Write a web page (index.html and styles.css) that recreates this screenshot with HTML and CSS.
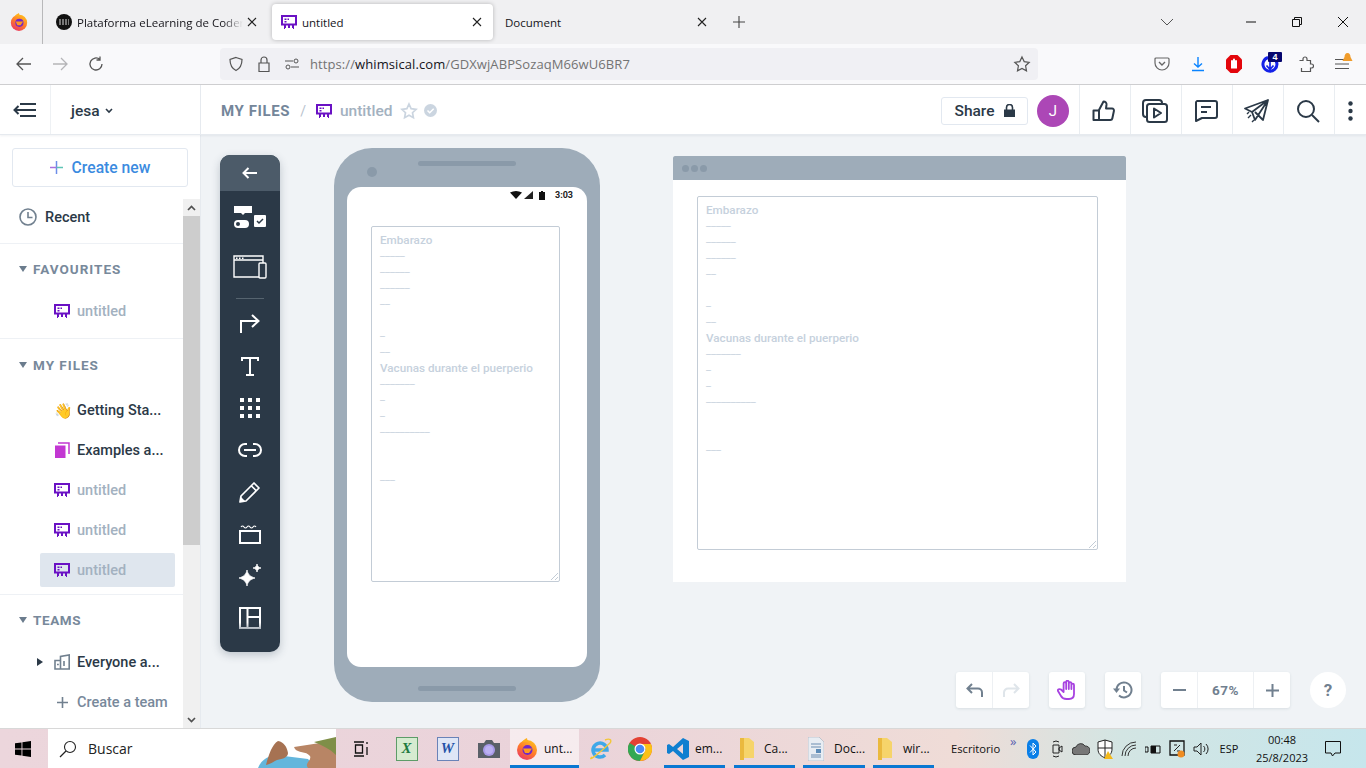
FILE: index.html
```html
<!DOCTYPE html>
<html lang="es">
<head>
<meta charset="utf-8">
<title>untitled</title>
<link rel="stylesheet" href="styles.css">
</head>
<body>
<svg class="defs" width="0" height="0">
  <defs>
    <linearGradient id="ffg" x1=".8" y1="0" x2=".2" y2="1"><stop offset="0" stop-color="#ffc21f"/><stop offset=".5" stop-color="#ff7a2a"/><stop offset="1" stop-color="#e8336b"/></linearGradient>
  </defs>
  <symbol id="wf" viewBox="0 0 16 14">
    <path fill="#6a11c4" fill-rule="evenodd" d="M0 0h16v10.500H0zM2 2v6.500h12V2z"/>
    <path fill="#6a11c4" d="M3.500 3.500h2V5h-2zM6.500 3.500H8V5H6.500zM3.500 6h2v1.500h-2zM3 10h2v3H4v1H3zM7 10h2v3H7zM11 10h2v4h-1v-1h-1z"/>
  </symbol>
  <symbol id="fox" viewBox="0 0 22 22">
    <circle cx="11" cy="12" r="10" fill="url(#ffg)"/>
    <path d="M6 4c1-2 3-3 5-4 0 2 1 3 3 4z" fill="#ffb01f"/>
    <circle cx="11.500" cy="12" r="5" fill="#7227c9"/>
    <path d="M7 10.500h9l-3 4.500H9z" fill="#ff9a1f"/>
  </symbol>
</svg>

<div class="tabbar">
  <div class="ff-cell">
    <svg width="18" height="18"><use href="#fox"/></svg>
  </div>
  <div class="tab">
    <svg class="fav" width="16" height="16" viewBox="0 0 16 16"><circle cx="8" cy="8" r="8" fill="#111"/><path d="M3 6h10M3 8h10M3 10h10" stroke="#ddd" stroke-width="1" stroke-dasharray="2 1"/></svg>
    <span class="tab-title fade">Plataforma eLearning de Coderhouse</span>
    <svg class="x" width="10" height="10" viewBox="0 0 10 10"><path d="M1 1l8 8M9 1l-8 8" stroke="#222" stroke-width="1.100"/></svg>
  </div>
  <div class="tab active">
    <svg class="fav" width="16" height="14"><use href="#wf"/></svg>
    <span class="tab-title">untitled</span>
    <svg class="x" width="10" height="10" viewBox="0 0 10 10"><path d="M1 1l8 8M9 1l-8 8" stroke="#222" stroke-width="1.100"/></svg>
  </div>
  <div class="tab plain">
    <span class="tab-title">Document</span>
    <svg class="x" width="10" height="10" viewBox="0 0 10 10"><path d="M1 1l8 8M9 1l-8 8" stroke="#222" stroke-width="1.100"/></svg>
  </div>
  <svg class="plus" width="12" height="12" viewBox="0 0 12 12"><path d="M6 0v12M0 6h12" stroke="#444" stroke-width="1.100"/></svg>
  <svg class="chev" width="14" height="8" viewBox="0 0 14 8"><path d="M1 1l6 6 6-6" fill="none" stroke="#555" stroke-width="1"/></svg>
  <div class="winbtn"><svg width="10" height="2"><path d="M0 1h10" stroke="#111" stroke-width="1"/></svg></div>
  <div class="winbtn"><svg width="10" height="10" viewBox="0 0 10 10"><path d="M.5 2.500h7v7h-7zM2.500 2.500v-2h7v7h-2" fill="none" stroke="#111"/></svg></div>
  <div class="winbtn"><svg width="10" height="10" viewBox="0 0 10 10"><path d="M0 0l10 10M10 0L0 10" stroke="#111" stroke-width="1"/></svg></div>
</div>

<div class="navbar">
  <div class="nbtn"><svg width="16" height="14" viewBox="0 0 16 14"><path d="M7 1L1 7l6 6M1 7h14" fill="none" stroke="#555" stroke-width="1.300"/></svg></div>
  <div class="nbtn"><svg width="16" height="14" viewBox="0 0 16 14"><path d="M9 1l6 6-6 6M15 7H1" fill="none" stroke="#b5b5b8" stroke-width="1.300"/></svg></div>
  <div class="nbtn"><svg width="16" height="16" viewBox="0 0 16 16"><path d="M14 8a6 6 0 1 1-2-4.500M12 .5v3.500H8.500" fill="none" stroke="#555" stroke-width="1.300"/></svg></div>
  <div class="urlbar">
    <svg width="16" height="16" viewBox="0 0 16 16"><path d="M8 1.500l6 2c0 6-2 9-6 11-4-2-6-5-6-11z" fill="none" stroke="#555" stroke-width="1.200"/></svg>
    <svg width="16" height="18" viewBox="0 0 16 18"><path d="M3 8h10v8.500H3zM5 8V5a3 3 0 0 1 6 0v3" fill="none" stroke="#555" stroke-width="1.200"/></svg>
    <svg width="16" height="16" viewBox="0 0 16 16"><path d="M1 5h8M7 11h8" stroke="#555" stroke-width="1.200"/><circle cx="12" cy="5" r="2" fill="none" stroke="#555"/><circle cx="4" cy="11" r="2" fill="none" stroke="#555"/></svg>
    <span class="url">https://<b>whimsical.com</b>/GDXwjABPSozaqM66wU6BR7</span>
    <svg class="ustar" width="18" height="18" viewBox="0 0 18 18"><path d="M9 2l2.200 4.600 5 .7-3.600 3.500.9 5L9 13.400l-4.500 2.400.9-5L1.800 7.300l5-.7z" fill="none" stroke="#555" stroke-width="1.200"/></svg>
  </div>
  <div class="nav-right">
    <div class="nbtn"><svg width="16" height="16" viewBox="0 0 16 16"><path d="M2 2h12a1 1 0 0 1 1 1v4a7 7 0 0 1-14 0V3a1 1 0 0 1 1-1z" fill="none" stroke="#666" stroke-width="1.200"/><path d="M5 6l3 3 3-3" fill="none" stroke="#666" stroke-width="1.400"/></svg></div>
    <div class="nbtn"><svg width="16" height="16" viewBox="0 0 16 16"><path d="M8 1v10M4 7.500L8 11l4-3.500M2 14.500h12" fill="none" stroke="#0a84ff" stroke-width="1.400"/></svg></div>
    <div class="nbtn"><svg width="18" height="20" viewBox="0 0 18 20"><path d="M5.500 1h7L17 5.500v9L12.500 19h-7L1 14.500v-9z" fill="#e3060c"/><path d="M6 14.500V7a1 1 0 0 1 2 0V5.500a1 1 0 0 1 2 0V7a1 1 0 0 1 2 0v7.500z" fill="#fff"/></svg></div>
    <div class="nbtn badge-wrap">
      <svg width="18" height="20" viewBox="0 0 18 20"><path d="M7 3.500a7 7 0 1 0 6 1" fill="none" stroke="#1421e8" stroke-width="3"/><path d="M9 6v9M5.500 11.500L9 15.500l3.500-4" fill="none" stroke="#1421e8" stroke-width="1.700"/></svg>
      <span class="badge">4</span>
    </div>
    <div class="nbtn"><svg width="16" height="18" viewBox="0 0 16 18"><path d="M2 5.500h3.500V4a2 2 0 0 1 4 0v1.500H13V9h1a2 2 0 0 1 0 4h-1v3.500H4V13" transform="translate(-.5 0)" fill="none" stroke="#555" stroke-width="1.200"/></svg></div>
    <div class="nbtn menu-wrap">
      <svg width="14" height="12" viewBox="0 0 14 12"><path d="M0 1.500h14M0 6h14M0 10.500h14" stroke="#555" stroke-width="1.200"/></svg>
      <svg class="bell" width="11" height="10" viewBox="0 0 10 10"><path d="M5 0c2 0 3 2 3 4l2 4H0l2-4c0-2 1-4 3-4z" fill="#f09c2b"/></svg>
    </div>
  </div>
</div>

<div class="app">
  <header class="app-head">
    <div class="head-left">
      <div class="toggle"><svg width="24" height="16" viewBox="0 0 24 16"><path d="M7 2h16M1 8h22M7 14h16M5.500 4L1.500 8l4 4" fill="none" stroke="#2b3947" stroke-width="2"/></svg></div>
      <div class="account"><span>jesa</span><svg width="8" height="6" viewBox="0 0 8 6"><path d="M1 1l3 3 3-3" fill="none" stroke="#2b3947" stroke-width="1.600"/></svg></div>
    </div>
    <div class="crumbs">
      <span class="crumb-root">MY FILES</span>
      <span class="crumb-sep">/</span>
      <svg width="16" height="14"><use href="#wf"/></svg>
      <span class="crumb-name">untitled</span>
      <svg width="18" height="18" viewBox="0 0 18 18"><path d="M9 2l2.100 4.600 5 .7-3.600 3.400.9 5L9 13.300l-4.400 2.400.9-5L1.900 7.300l5-.7z" fill="none" stroke="#cbd5e0" stroke-width="1.700"/></svg>
      <svg width="13" height="13" viewBox="0 0 13 13"><circle cx="6.500" cy="6.500" r="6.500" fill="#cbd5e0"/><path d="M3.500 6.500l2.200 2.200 4-4" fill="none" stroke="#fff" stroke-width="1.500"/></svg>
    </div>
    <div class="head-right">
      <div class="share"><span>Share</span><svg width="11" height="13" viewBox="0 0 11 13"><path d="M0 5.500h11V13H0z" fill="#2b3947"/><path d="M2.500 6V3.500a3 3 0 0 1 6 0V6" fill="none" stroke="#2b3947" stroke-width="1.600"/></svg></div>
      <div class="avatar">J</div>
      <div class="hcell"><svg width="24" height="24" viewBox="0 0 24 24"><path d="M7 11l4.500-8.500c2 0 3.200 1.300 3 3.200L14 9.500h6c1.400 0 2.200 1.200 1.900 2.500l-1.600 7.500c-.2 1-1 1.500-2 1.500H7zM7 11.500H1.500V21H7" fill="none" stroke="#2b3947" stroke-width="2" stroke-linejoin="round"/></svg></div>
      <div class="hcell"><svg width="26" height="24" viewBox="0 0 26 24"><path d="M4 18a3 3 0 0 1-3-3V4a3 3 0 0 1 3-3h13a3 3 0 0 1 3 3" fill="none" stroke="#2b3947" stroke-width="2"/><rect x="5" y="5" width="20" height="18" rx="2.500" fill="#fff" stroke="#2b3947" stroke-width="2"/><path d="M12 9.500l7 4.500-7 4.500z" fill="none" stroke="#2b3947" stroke-width="2" stroke-linejoin="round"/></svg></div>
      <div class="hcell"><svg width="24" height="22" viewBox="0 0 24 22"><path d="M3 1h18a2 2 0 0 1 2 2v13a2 2 0 0 1-2 2H8l-6 3V3a2 2 0 0 1 1-2zM7 7h10M7 12h6" fill="none" stroke="#2b3947" stroke-width="2" stroke-linejoin="round"/></svg></div>
      <div class="hcell"><svg width="26" height="24" viewBox="0 0 26 24"><path d="M24 1L1 9.500l7 3.500 3 8zM24 1L8 13M24 1L19 21l-8-8" fill="none" stroke="#2b3947" stroke-width="1.800" stroke-linejoin="round"/><path d="M3 15l2-2M4 19l3-3M8 23l2-2" stroke="#2b3947" stroke-width="1.400"/></svg></div>
      <div class="hcell"><svg width="24" height="24" viewBox="0 0 24 24"><circle cx="10" cy="10" r="8" fill="none" stroke="#2b3947" stroke-width="2"/><path d="M16 16l7 7" stroke="#2b3947" stroke-width="2"/></svg></div>
      <div class="hcell last"><svg width="5" height="20" viewBox="0 0 5 20"><circle cx="2.500" cy="2.500" r="2.200" fill="#2b3947"/><circle cx="2.500" cy="10" r="2.200" fill="#2b3947"/><circle cx="2.500" cy="17.500" r="2.200" fill="#2b3947"/></svg></div>
    </div>
  </header>

  <div class="app-body">
    <aside class="sidebar">
      <div class="create-wrap">
        <div class="create"><svg width="13" height="13" viewBox="0 0 13 13"><path d="M6.500 0v13" stroke="#6d8ee8" stroke-width="1.500"/><path d="M0 6.500h6.500" stroke="#a970de" stroke-width="1.500"/><path d="M6.500 6.500H13" stroke="#5fc4b5" stroke-width="1.500"/></svg><span>Create new</span></div>
      </div>
      <div class="side-scroll">
        <div class="side-list">
          <div class="recent"><svg width="18" height="18" viewBox="0 0 18 18"><circle cx="9" cy="9" r="8" fill="none" stroke="#71808f" stroke-width="1.600"/><path d="M9 4v5.500h4.500" fill="none" stroke="#71808f" stroke-width="1.600"/></svg><span>Recent</span></div>
          <section class="sect favs">
            <div class="sect-head fav-head"><i class="tri"></i>FAVOURITES</div>
            <div class="item"><svg width="16" height="14"><use href="#wf"/></svg><span class="muted">untitled</span></div>
          </section>
          <section class="sect files">
            <div class="sect-head files-head"><i class="tri"></i>MY FILES</div>
            <div class="item"><span class="emoji">👋</span><span>Getting Sta...</span></div>
            <div class="item"><svg width="16" height="16" viewBox="0 0 16 16"><path d="M1 3.500h10.500V16H1z" fill="#c237d2"/><path d="M4 1h11v11" fill="none" stroke="#c237d2" stroke-width="1.500"/></svg><span>Examples a...</span></div>
            <div class="item"><svg width="16" height="14"><use href="#wf"/></svg><span class="muted">untitled</span></div>
            <div class="item"><svg width="16" height="14"><use href="#wf"/></svg><span class="muted">untitled</span></div>
            <div class="item current"><svg width="16" height="14"><use href="#wf"/></svg><span class="muted">untitled</span></div>
          </section>
          <section class="teams">
            <div class="sect-head teams-head"><i class="tri"></i>TEAMS</div>
            <div class="item team-item"><i class="tri-right"></i><svg width="16" height="16" viewBox="0 0 16 16"><path d="M1 6.500h5.500V15H1zM6.500 15V2.500L15.200 1v14zM1 15h14.200M3 10.500h1.800M10 7v5" fill="none" stroke="#71808f" stroke-width="1.600"/></svg><span>Everyone a...</span></div>
            <div class="item create-team"><svg width="11" height="11" viewBox="0 0 11 11"><path d="M5.500 0v11M0 5.500h11" stroke="#71808f" stroke-width="1.600"/></svg><span>Create a team</span></div>
          </section>
        </div>
        <div class="scrollbar">
          <div class="sb-btn"><svg width="9" height="6" viewBox="0 0 9 6"><path d="M1 5l3.500-3.500L8 5" fill="none" stroke="#505050" stroke-width="1.700"/></svg></div>
          <div class="sb-thumb"></div>
          <div class="sb-track"></div>
          <div class="sb-btn"><svg width="9" height="6" viewBox="0 0 9 6"><path d="M1 1l3.500 3.500L8 1" fill="none" stroke="#505050" stroke-width="1.700"/></svg></div>
        </div>
      </div>
    </aside>

    <main class="canvas">
      <div class="toolbar">
        <div class="tool-back"><svg width="16" height="12" viewBox="0 0 16 12"><path d="M6.500 1L1.500 6l5 5M1.500 6H15" fill="none" stroke="#fff" stroke-width="2"/></svg></div>
        <div class="tools">
          <div class="tool"><svg width="32" height="24" viewBox="0 0 32 24"><path d="M0 0h18v7h-7l-2 2-2-2H0z" fill="#fff"/><rect x="0" y="14" width="15" height="8" rx="4" fill="#fff"/><circle cx="4" cy="18" r="2" fill="#2b3947"/><rect x="20" y="9" width="12" height="12" rx="1" fill="#fff"/><path d="M23 15l2 2 4-4" fill="none" stroke="#2b3947" stroke-width="1.500"/></svg></div>
          <div class="tool wf-tool"><svg width="34" height="24" viewBox="0 0 34 24"><path d="M1 1h29v21H1zM1 5h29" fill="none" stroke="#fff" stroke-width="1.400"/><path d="M3 2.500h1.500V4H3zM6 2.500h1.500V4H6zM9 2.500h1.500V4H9z" fill="#fff"/><rect x="26" y="8" width="7" height="15" rx="1" fill="#2b3947" stroke="#fff" stroke-width="1.400"/></svg></div>
          <div class="tool-sep"></div>
          <div class="tool"><svg width="20" height="20" viewBox="0 0 20 20"><path d="M1 19V7h17M12 1l6.500 6-6.500 6" fill="none" stroke="#fff" stroke-width="2"/></svg></div>
          <div class="tool"><svg width="18" height="19" viewBox="0 0 18 19"><path d="M1 4V1h16v3M9 1v17M5 18h8" fill="none" stroke="#fff" stroke-width="2"/></svg></div>
          <div class="tool"><svg width="20" height="20" viewBox="0 0 20 20"><path fill="#fff" d="M0 0h4v4H0zM8 0h4v4H8zM16 0h4v4h-4zM0 8h4v4H0zM8 8h4v4H8zM16 8h4v4h-4zM0 16h4v4H0zM8 16h4v4H8zM16 16h4v4h-4z"/></svg></div>
          <div class="tool"><svg width="24" height="14" viewBox="0 0 24 14"><path d="M9 1H7a6 6 0 0 0 0 12h2M15 1h2a6 6 0 0 1 0 12h-2M6 7h12" fill="none" stroke="#fff" stroke-width="2"/></svg></div>
          <div class="tool"><svg width="22" height="22" viewBox="0 0 22 22"><path d="M15 2l5 5L7 20l-6 1 1-6zM12.500 5l4.500 4.500" fill="none" stroke="#fff" stroke-width="1.700" stroke-linejoin="round"/><path d="M1 21l1-5 4 4z" fill="#fff"/></svg></div>
          <div class="tool"><svg width="22" height="20" viewBox="0 0 22 20"><path d="M1 7h20v12H1z" fill="none" stroke="#fff" stroke-width="2"/><path d="M2 3q1.500-2 3 0t3 0 3 0 3 0 3 0" fill="none" stroke="#fff" stroke-width="1.200"/></svg></div>
          <div class="tool"><svg width="24" height="24" viewBox="0 0 24 24"><path d="M9 6c.8 4.500 3 6.500 8 8-5 1.500-7.200 3.500-8 8-.8-4.500-3-6.500-8-8 5-1.500 7.200-3.500 8-8zM19 0c.5 2.500 1.500 3.500 4 4-2.500.5-3.500 1.500-4 4-.5-2.500-1.500-3.500-4-4 2.500-.5 3.500-1.500 4-4z" fill="#fff" stroke="#fff" stroke-width=".8" stroke-linejoin="round"/></svg></div>
          <div class="tool"><svg width="22" height="22" viewBox="0 0 22 22"><defs><linearGradient id="lg" gradientUnits="userSpaceOnUse" x1="0" y1="0" x2="0" y2="22"><stop offset=".7" stop-color="#fff"/><stop offset="1" stop-color="#aab2ba"/></linearGradient></defs><path d="M1 1h20v20H1zM8.500 1v20M8.500 10H21" fill="none" stroke="url(#lg)" stroke-width="2"/></svg></div>
        </div>
      </div>

      <div class="phone">
        <div class="phone-top"><i class="cam"></i><i class="speaker"></i></div>
        <div class="phone-screen">
          <div class="status">
            <svg width="12" height="8" viewBox="0 0 12 8"><path d="M0 1.500Q6-1.500 12 1.500L6 8z" fill="#111"/></svg>
            <svg width="9" height="8" viewBox="0 0 9 8"><path d="M9 0v8H0z" fill="#222"/></svg>
            <svg class="batt" width="6" height="9" viewBox="0 0 6 9"><path d="M2 0h2v1h2v8H0V1h2z" fill="#111"/></svg>
            <span>3:03</span>
          </div>
          <div class="note phone-note">
            <p class="h">Embarazo</p><p>_____</p><p>______</p><p>______</p><p>__</p><p>&nbsp;</p><p>_</p><p>__</p>
            <p class="h">Vacunas durante el puerperio</p><p>_______</p><p>_</p><p>_</p><p>__________</p><p>&nbsp;</p><p>&nbsp;</p><p>___</p>
            <svg class="grip" width="7" height="7" viewBox="0 0 7 7"><path d="M0 7l7-7M4 7l3-3" stroke="#c3ccd6"/></svg>
          </div>
        </div>
        <div class="phone-bottom"><i class="speaker low"></i></div>
      </div>

      <div class="window">
        <div class="win-bar"><i></i><i></i><i></i></div>
        <div class="win-body">
          <div class="note win-note">
            <p class="h">Embarazo</p><p>_____</p><p>______</p><p>______</p><p>__</p><p>&nbsp;</p><p>_</p><p>__</p>
            <p class="h">Vacunas durante el puerperio</p><p>_______</p><p>_</p><p>_</p><p>__________</p><p>&nbsp;</p><p>&nbsp;</p><p>___</p>
            <svg class="grip" width="7" height="7" viewBox="0 0 7 7"><path d="M0 7l7-7M4 7l3-3" stroke="#c3ccd6"/></svg>
          </div>
        </div>
      </div>

      <div class="controls">
        <div class="ctl-group">
          <div class="ctl w36"><svg width="17" height="14" viewBox="0 0 17 14"><path d="M6 1L1.500 5.500 6 10M1.500 5.500H12a4 4 0 0 1 4 4V14" fill="none" stroke="#71808f" stroke-width="2"/></svg></div>
          <div class="ctl w37 sep"><svg width="17" height="14" viewBox="0 0 17 14"><path d="M11 1l4.500 4.500L11 10M15.500 5.500H5a4 4 0 0 0-4 4V14" fill="none" stroke="#dfe5ea" stroke-width="2"/></svg></div>
        </div>
        <div class="ctl-group"><div class="ctl w36"><svg width="20" height="20" viewBox="0 0 20 20"><path d="M1 11l3 5c1 2 3 3 5.500 3H12c3 0 5-2 5-5V5a1.300 1.300 0 0 0-2.600 0V9V3.500a1.300 1.300 0 0 0-2.600 0V9V2a1.300 1.300 0 0 0-2.600 0v7V3.500a1.300 1.300 0 0 0-2.600 0V12L4 9.500C2.500 8.500 0 9.500 1 11z" fill="none" stroke="#a742e0" stroke-width="1.800" stroke-linejoin="round"/></svg></div></div>
        <div class="ctl-group"><div class="ctl w36"><svg width="20" height="18" viewBox="0 0 20 18"><path d="M3.500 9a7.500 7.500 0 1 1 2.500 5.500" fill="none" stroke="#71808f" stroke-width="2"/><path d="M0 7.500h7L3.500 12z" fill="#71808f"/><path d="M11 5v4.500l3 2" fill="none" stroke="#71808f" stroke-width="2"/></svg></div></div>
        <div class="ctl-group">
          <div class="ctl w36"><svg width="13" height="2"><path d="M0 1h13" stroke="#71808f" stroke-width="2"/></svg></div>
          <div class="ctl w56 sep pct">67%</div>
          <div class="ctl w37 sep"><svg width="13" height="13" viewBox="0 0 13 13"><path d="M6.500 0v13M0 6.500h13" stroke="#71808f" stroke-width="2"/></svg></div>
        </div>
        <div class="help">?</div>
      </div>
    </main>
  </div>
</div>

<footer class="taskbar">
  <div class="start"><svg width="16" height="16" viewBox="0 0 16 16"><path fill="#000" d="M0 2.300L6.500 1.400v6.100H0zM7.400 1.300L16 0v7.500H7.400zM0 8.400h6.500v6.200L0 13.700zM7.400 8.400H16V16l-8.600-1.200z"/></svg></div>
  <div class="search">
    <svg width="18" height="18" viewBox="0 0 18 18"><circle cx="11" cy="7" r="5.500" fill="none" stroke="#222" stroke-width="1.100"/><path d="M7 11l-6 6" stroke="#222" stroke-width="1.300"/></svg>
    <span>Buscar</span>
    <svg class="island" width="78" height="39" viewBox="0 0 78 39"><path d="M0 39C3 31 10 27 18 26l32 4 8 9z" fill="#63b6dc"/><path d="M8 36c2-8 6-21 12-24 6 1 9 6 10 12 0 4-5 6-11 7-4 2-7 4-11 5z" fill="#a67252"/><path d="M36 18l26-4 16-2v27H50c-4-5 4-7 2-12-4-5-12-3-15-7z" fill="#b88565"/><path d="M56 13l22-5v18c-6-6-14-10-22-13z" fill="#7f8f48"/></svg>
  </div>
  <div class="tb-icon taskview"><svg width="16" height="16" viewBox="0 0 16 16"><path d="M1 1h10M1 15h10M2.500 4h7v8h-7zM14 1v2M14 6v8" fill="none" stroke="#111" stroke-width="1.300"/></svg></div>
  <div class="tb-icon"><span class="office excel">X</span></div>
  <div class="tb-icon"><span class="office word">W</span></div>
  <div class="tb-icon"><svg width="24" height="20" viewBox="0 0 24 20"><path d="M1 4h6l2-3h6l2 3h6v15H1z" fill="#5a6068"/><circle cx="12" cy="11" r="6" fill="#a99ae8"/><circle cx="12" cy="11" r="4" fill="#bcb1f2"/></svg></div>
  <div class="tb-app ff active-app">
    <svg width="22" height="22"><use href="#fox"/></svg>
    <span>unt...</span>
  </div>
  <div class="tb-icon ie"><svg width="24" height="24" viewBox="0 0 24 24"><path d="M5 13h14a7 7 0 1 0-2 5" fill="none" stroke="#3fa8e8" stroke-width="3.500"/><path d="M4 20C0 24 6 21 22 6c2-3 0-5-5-3" fill="none" stroke="#f2c73a" stroke-width="1.400"/></svg></div>
  <div class="tb-icon chrome"><svg width="24" height="24" viewBox="0 0 24 24"><circle cx="12" cy="12" r="12" fill="#e34133"/><path d="M12 12L1.500 6A12 12 0 0 0 12 24l6-12z" fill="#34a853"/><path d="M12 7h11a12 12 0 0 1-11 17l6-12z" fill="#fbc116"/><circle cx="12" cy="12" r="5.500" fill="#fff"/><circle cx="12" cy="12" r="4.300" fill="#4a8af4"/></svg></div>
  <div class="tb-app vs active-line">
    <svg width="24" height="24" viewBox="0 0 24 24"><path d="M17 1l6 3v16l-6 3L7 14l-4 3-2-1V8l2-1 4 3zM17 7l-6 5 6 5z" fill="#0f7fd0"/></svg>
    <span>em...</span>
  </div>
  <div class="tb-app folder active-line">
    <svg width="14" height="22" viewBox="0 0 14 22"><path d="M0 0h9l5 4v16H0z" fill="#f6d46a"/><path d="M0 0h4v22H0z" fill="#eab93e"/></svg>
    <span>Ca...</span>
  </div>
  <div class="tb-app doc active-line">
    <svg width="16" height="24" viewBox="0 0 16 24"><path d="M0 0h11l5 5v19H0z" fill="#e8edf3" stroke="#a3adb8" stroke-width=".6"/><path d="M3 7h10M3 10h10M3 18h10M3 20h10" stroke="#6d8db0" stroke-width="1"/><path d="M8 12h5v4H8z" fill="#5d8cb8"/></svg>
    <span>Doc...</span>
  </div>
  <div class="tb-app folder2 active-line">
    <svg width="14" height="22" viewBox="0 0 14 22"><path d="M0 0h9l5 4v16H0z" fill="#f6d46a"/><path d="M0 0h4v22H0z" fill="#eab93e"/></svg>
    <span>wir...</span>
  </div>
  <span class="desk">Escritorio</span>
  <span class="more">»</span>
  <div class="tray">
    <div class="ti"><svg width="12" height="20" viewBox="0 0 12 20"><rect width="12" height="20" rx="6" fill="#0a7fe8"/><path d="M3 6.500l6 6.500-3 3V4l3 3-6 6.500" fill="none" stroke="#fff"/></svg></div>
    <div class="ti"><svg width="12" height="18" viewBox="0 0 12 18"><path d="M2 5h6v8H2zM8 8l3-2v6l-3-2zM2 2q3-2 6 0M2 16q3 2 6 0" fill="none" stroke="#222"/></svg></div>
    <div class="ti"><svg width="18" height="12" viewBox="0 0 18 12"><path d="M4 12a4 4 0 0 1 0-8 5 5 0 0 1 9-1 4.500 4.500 0 0 1 1 9z" fill="#777" stroke="#222" stroke-width=".8"/></svg></div>
    <div class="ti shield"><svg width="16" height="20" viewBox="0 0 16 20"><path d="M8 1l7 2v7c0 5-3 7-7 9-4-2-7-4-7-9V3z" fill="#fff" stroke="#222"/><path d="M8 1v18M1 9h14" stroke="#222"/><path d="M13 11l5 8H9z" transform="translate(-2 1)" fill="#f3b91c"/></svg></div>
    <div class="ti"><svg width="16" height="16" viewBox="0 0 16 16"><path d="M1 15A14 14 0 0 1 15 1M4 15A11 11 0 0 1 15 4M7 15a8 8 0 0 1 8-8" fill="none" stroke="#333"/></svg></div>
    <div class="ti"><svg width="16" height="12" viewBox="0 0 16 12"><path d="M6 3h9v7H6zM0 4h3v5H0z" fill="none" stroke="#111"/><path d="M6 3h5v7H6z" fill="#111"/></svg></div>
    <div class="ti"><svg width="16" height="18" viewBox="0 0 16 18"><path d="M1 1h14v14H1z" fill="none" stroke="#111" stroke-width="1.300"/><path d="M5 11l6-6M5 5h3M11 11H8" stroke="#222"/><circle cx="12" cy="14" r="3.500" fill="#ef8c21"/></svg></div>
    <div class="ti"><svg width="16" height="14" viewBox="0 0 16 14"><path d="M1 5h3l4-4v12L4 9H1zM10.500 4a4 4 0 0 1 0 6M13 2a7 7 0 0 1 0 10" fill="none" stroke="#222"/></svg></div>
  </div>
  <span class="lang">ESP</span>
  <div class="clock"><span>00:48</span><span>25/8/2023</span></div>
  <div class="notif"><svg width="16" height="16" viewBox="0 0 16 16"><path d="M.5.5h15v11.500H10L7.500 15 6 12H.5z" fill="none" stroke="#111"/></svg></div>
</footer>
</body>
</html>
```
FILE: styles.css
```css
* { box-sizing: border-box; }
html, body { margin: 0; padding: 0; }
body { width: 1366px; height: 768px; overflow: hidden; display: flex; flex-direction: column; font-family: Roboto, "Liberation Sans", sans-serif; background: #fff; color: #2b3947; }
.defs { position: absolute; }
svg { display: block; flex: none; }
p { margin: 0; }
i { display: block; }

/* browser tabs */
.tabbar { height: 44px; flex: none; display: flex; align-items: center; background: #f0f0f2; font-family: "Open Sans", sans-serif; font-size: 11.500px; color: #15141a; }
.ff-cell { width: 43px; height: 44px; flex: none; display: flex; align-items: center; justify-content: center; border-right: 1px solid #b8b8ba; padding-right: 5px; margin-right: 4px; }
.tab { width: 221px; height: 36px; flex: none; margin-right: 4px; display: flex; align-items: center; padding: 0 11px 0 9px; gap: 5px; border-radius: 4px; }
.tab.active { background: #fff; box-shadow: 0 0 4px rgba(0,0,0,.25); }
.tab.plain { padding-left: 8px; }
.tab-title { flex: 1; min-width: 0; overflow: hidden; white-space: nowrap; }
.fade { -webkit-mask-image: linear-gradient(90deg, #000 88%, transparent); mask-image: linear-gradient(90deg, #000 88%, transparent); }
.tab .x { margin-left: -1px; }
.plus { margin-left: 11px; }
.chev { margin-left: 415px; margin-right: 54px; }
.winbtn { width: 46px; height: 44px; flex: none; display: flex; align-items: center; justify-content: center; }

/* nav bar */
.navbar { height: 41px; flex: none; display: flex; align-items: center; padding: 0 6px 1px; background: #f9f9fb; border-bottom: 1px solid #cfcfd1; }
.nbtn { width: 36px; height: 32px; flex: none; display: flex; align-items: center; justify-content: center; position: relative; }
.urlbar { width: 818px; height: 32px; flex: none; margin-left: 106px; background: #f0f0f4; border-radius: 4px; display: flex; align-items: center; padding: 0 7px 0 8px; gap: 12px; }
.url { margin-left: -2px; font-family: "Open Sans", sans-serif; font-size: 13px; letter-spacing: .09px; color: #737373; white-space: nowrap; }
.url b { font-weight: 400; color: #15141a; }
.ustar { margin-left: auto; }
.nav-right { margin-left: auto; display: flex; }
.badge { position: absolute; top: 4px; right: 6px; width: 14px; height: 10px; background: #06066e; color: #fff; font: 700 9px/10px "Liberation Sans", sans-serif; text-align: center; border-radius: 1px; }
.bell { position: absolute; top: 5px; right: 7px; }

/* app header */
.app { flex: 1; min-height: 0; display: flex; flex-direction: column; }
.app-head { height: 50px; flex: none; display: flex; align-items: center; background: #fff; border-bottom: 1px solid #e6eaef; box-shadow: 0 1px 2px rgba(60,80,100,.08); position: relative; z-index: 2; }
.head-left { width: 201px; height: 49px; flex: none; display: flex; border-right: 1px solid #e6eaef; }
.toggle { width: 51px; display: flex; align-items: center; justify-content: center; border-right: 1px solid #eef1f4; }
.account { display: flex; align-items: center; gap: 5px; padding: 2px 0 0 20px; font-weight: 500; font-size: 15.500px; }
.crumbs { display: flex; align-items: center; margin: 2px 0 0 20px; }
.crumb-root { font-weight: 700; font-size: 15px; letter-spacing: .6px; color: #74869a; }
.crumb-sep { margin: 0 10px; font-size: 14px; color: #b7c2ce; }
.crumb-name { margin: 0 8px; font-weight: 500; font-size: 15.500px; color: #a3b1c0; }
.crumbs svg:last-child { margin-left: 6px; }
.head-right { margin-left: auto; display: flex; align-items: center; height: 49px; }
.share { width: 87px; height: 28px; display: flex; align-items: center; justify-content: center; gap: 9px; border: 1px solid #e2e8f0; border-radius: 3px; font-weight: 500; font-size: 15.500px; margin: 2px 9px 0 0; }
.avatar { width: 32px; height: 32px; border-radius: 50%; background: #ac47b6; color: #fff; font-size: 15px; display: flex; align-items: center; justify-content: center; margin: 2px 10px 0 0; }
.hcell { width: 51px; height: 49px; display: flex; align-items: center; justify-content: center; border-left: 1px solid #e9edf1; padding: 2px 2px 0 0; }
.hcell.last { width: 32px; padding-right: 0; }

.app-body { flex: 1; min-height: 0; display: flex; }

/* sidebar */
.sidebar { width: 201px; flex: none; display: flex; flex-direction: column; background: #fff; border-right: 1px solid #e6eaef; }
.create-wrap { height: 64px; flex: none; padding: 13px 12px 0; }
.create { height: 39px; display: flex; align-items: center; justify-content: center; gap: 9px; border: 1px solid #e2e8f0; border-radius: 3px; color: #3b8be0; font-weight: 500; font-size: 15.700px; }
.side-scroll { flex: 1; min-height: 0; display: flex; }
.side-list { width: 183px; flex: none; font-size: 14.500px; font-weight: 500; }
.recent { height: 45px; padding: 0 0 8px 19px; display: flex; align-items: center; gap: 8px; border-bottom: 1px solid #eef1f5; }
.sect, .teams { display: flex; flex-direction: column; }
.sect { border-bottom: 1px solid #eef1f5; }
.sect-head { display: flex; align-items: center; gap: 6px; height: 24px; padding-left: 19px; font-weight: 700; font-size: 13.500px; letter-spacing: 1px; color: #78899b; }
.fav-head { margin: 13px 0 10px; }
.files-head { margin: 14px 0 13px; }
.teams-head { margin: 13px 0 10px; letter-spacing: .6px; }
.tri { width: 0; height: 0; border: 4.500px solid transparent; border-top: 6px solid #6b7c8d; border-bottom: 0; }
.item { height: 34px; flex: none; margin: 3px 8px 3px 40px; padding-left: 14px; display: flex; align-items: center; gap: 7px; border-radius: 2px; white-space: nowrap; }
.favs .item:last-child { margin-bottom: 10px; }
.files .item:last-child { margin-bottom: 7px; }
.item.current { background: #dfe6ee; }
.muted { color: #a3b1c0; }
.emoji { width: 16px; font-size: 15px; line-height: 1; color: #f2b51f; font-family: "Noto Sans", "DejaVu Sans", sans-serif; }
.team-item { position: relative; }
.tri-right { position: absolute; left: -3px; top: 13px; width: 0; height: 0; border: 4px solid transparent; border-left: 6px solid #2b3947; border-right: 0; }
.create-team { color: #78899b; gap: 0; }
.create-team svg { margin: 0 9px 0 3px; }
.scrollbar { width: 17px; flex: none; display: flex; flex-direction: column; background: #f0f0f0; }
.sb-btn { height: 17px; display: flex; align-items: center; justify-content: center; }
.sb-thumb { height: 329px; background: #cdcdcd; }
.sb-track { flex: 1; }

/* canvas */
.canvas { flex: 1; position: relative; background: #f0f3f6; overflow: hidden; }
.toolbar { position: absolute; left: 19px; top: 20px; width: 60px; height: 497px; border-radius: 10px; background: #2b3947; box-shadow: 0 3px 8px rgba(40,60,80,.25); overflow: hidden; }
.tool-back { height: 36px; background: #4c5b69; display: flex; align-items: center; justify-content: center; }
.tools { display: flex; flex-direction: column; align-items: center; }
.tool { height: 42px; width: 60px; flex: none; display: flex; align-items: center; justify-content: center; }
.tools .tool:first-child { margin-top: 6px; }
.tools .wf-tool { margin-top: 7px; }
.tool-sep { width: 28px; height: 1px; flex: none; margin: 10px 0 4px; background: #56646f; }

.phone { position: absolute; left: 133px; top: 13px; width: 266px; height: 554px; border-radius: 38px; background: #9eacb9; padding: 0 13px; display: flex; flex-direction: column; }
.phone-top { height: 39px; flex: none; position: relative; }
.cam { position: absolute; left: 20px; top: 19px; width: 10px; height: 10px; border-radius: 50%; background: #8a9aa9; }
.speaker { position: absolute; left: 71px; top: 13px; width: 98px; height: 5px; border-radius: 3px; background: #8a9aa9; }
.phone-screen { height: 480px; flex: none; background: #fff; border-radius: 14px; padding-top: 24px; position: relative; padding-left: 24px; }
.status { position: absolute; top: 2px; right: 14px; height: 12px; display: flex; align-items: center; gap: 2px; font-weight: 700; font-size: 9px; color: #222; }
.status .batt { margin-left: 4px; }
.status span { margin-left: 8px; }
.phone-bottom { position: relative; flex: 1; }
.speaker.low { top: 19px; }
.note { position: relative; border: 1.500px solid #c3ccd6; border-radius: 2px; background: #fff; padding: 5px 8px; font-size: 11px; line-height: 16px; color: #cbd5e0; white-space: nowrap; overflow: hidden; }
.note .h { font-weight: 500; font-size: 11.700px; color: #c6d1dd; }
.note p:not(.h) { transform: translateY(-3px); }
.phone-note { width: 189px; height: 356px; margin-top: 15px; }
.grip { position: absolute; right: 1px; bottom: 1px; }
.window { position: absolute; left: 472px; top: 21px; width: 453px; height: 426px; background: #fff; }
.win-bar { height: 24px; background: #9eacb9; display: flex; align-items: center; gap: 2px; padding-left: 9px; border-radius: 2px 2px 0 0; }
.win-bar i { width: 7px; height: 7px; border-radius: 50%; background: #8a9aa9; }
.win-note { width: 401px; height: 354px; margin: 16px 0 0 24px; }

.controls { position: absolute; right: 20px; bottom: 20px; display: flex; gap: 20px; }
.ctl-group { height: 36px; display: flex; background: #fff; border-radius: 3px; box-shadow: 0 1px 3px rgba(50,70,90,.12); }
.ctl { height: 36px; display: flex; align-items: center; justify-content: center; }
.w36 { width: 36px; }
.w37 { width: 37px; }
.w56 { width: 56px; }
.sep { border-left: 1px solid #edf0f3; }
.pct { font-weight: 700; font-size: 13.500px; letter-spacing: .5px; color: #71808f; }
.help { width: 36px; height: 36px; border-radius: 50%; background: #fff; display: flex; align-items: center; justify-content: center; font-weight: 700; font-size: 17px; color: #71808f; }

/* taskbar */
.taskbar { height: 40px; flex: none; display: flex; align-items: center; background: linear-gradient(90deg, #ecd6dc 0%, #ead3da 40%, #efdcd7 70%, #d3e5e3 82%, #c6e6ec 100%); font-family: "Open Sans", sans-serif; font-size: 12px; color: #111; border-top: 1px solid #d8d8d8; }
.start { width: 48px; height: 39px; flex: none; display: flex; align-items: center; justify-content: center; padding-right: 3px; }
.search { width: 288px; height: 39px; flex: none; background: #fff; display: flex; align-items: center; padding-left: 11px; gap: 11px; position: relative; font-size: 14px; color: #222; margin-right: 1px; }
.island { position: absolute; right: 0; bottom: 0; }
.tb-icon { width: 41px; height: 39px; flex: none; display: flex; align-items: center; justify-content: center; }
.taskview { width: 48px; margin-right: 1px; }
.office { width: 22px; height: 24px; display: flex; align-items: center; justify-content: center; font: italic 700 15px "Liberation Serif", serif; }
.excel { background: #d6ebd0; color: #1f7a3f; border: 1px solid #5d9c68; }
.word { background: #dfe6f6; color: #2452a8; border: 1px solid #6a83b8; }
.tb-app { height: 39px; flex: none; display: flex; align-items: center; position: relative; }
.tb-app::after { content: ""; position: absolute; left: 0; right: 0; bottom: 0; height: 3px; background: #0a78d2; }
.ff { width: 69px; margin-left: 1px; background: rgba(255,255,255,.55); padding-left: 6px; gap: 6px; }
.ie { width: 40px; margin-left: 1px; }
.chrome { width: 40px; }
.vs { width: 61px; margin-left: 4px; padding-left: 2px; gap: 5px; }
.folder { width: 61px; margin-left: 9px; padding-left: 6px; gap: 10px; }
.doc { width: 62px; margin-left: 8px; padding-left: 5px; gap: 10px; }
.folder2 { width: 61px; margin-left: 8px; padding-left: 5px; gap: 11px; }
.desk { margin-left: 17px; width: 59px; font-size: 11.200px; }
.more { width: 11px; height: 30px; color: #5b5fb0; font-size: 13px; line-height: 14px; }
.tray { display: flex; }
.ti { width: 24px; height: 39px; display: flex; align-items: center; justify-content: center; }
.lang { width: 26px; margin-left: 3px; text-align: center; font-size: 11px; }
.clock { width: 62px; margin-left: 9px; display: flex; flex-direction: column; align-items: center; font-size: 11px; line-height: 18px; }
.notif { width: 40px; padding-left: 12px; display: flex; }
```
